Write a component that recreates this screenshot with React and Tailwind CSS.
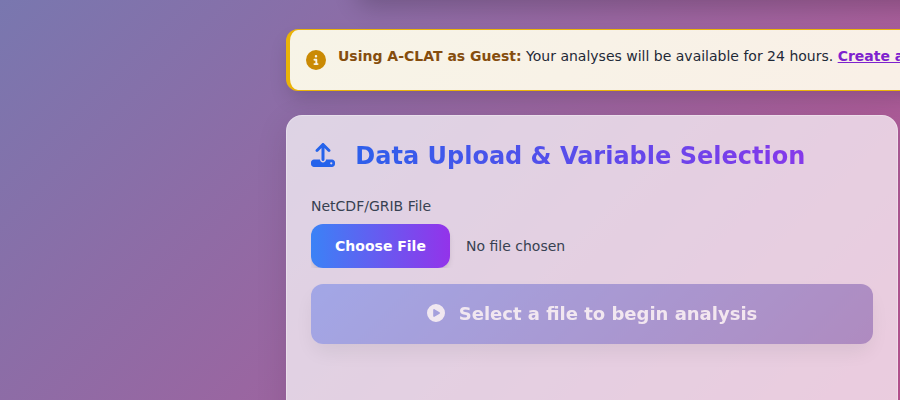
import { FaCircleInfo, FaCirclePlay, FaUpload } from 'react-icons/fa6';

function GuestBanner() {
  return (
    <div className="flex h-[62px] w-[900px] items-start rounded-xl border border-l-4 border-[#eab308] bg-[linear-gradient(135deg,#f7f4e7,#faeee7)] bg-origin-border p-4 shadow-[0_10px_20px_-3px_rgba(0,0,0,0.15)]">
      <FaCircleInfo className="mt-1 mr-3 size-5 shrink-0 text-[#ca8a04]" />
      <p className="text-sm whitespace-nowrap text-[#1f2937]">
        <strong className="font-bold text-[#854d0e]">Using A-CLAT as Guest:</strong> Your analyses will be available for
        24 hours.{' '}
        <a href="#" className="font-bold text-[#7e22ce] underline">
          Create an account
        </a>
      </p>
    </div>
  );
}

function UploadCard() {
  return (
    <section className="mt-6 h-[400px] w-[612px] rounded-2xl border border-white/30 bg-white/70 p-6 shadow-[0_8px_32px_rgba(0,0,0,0.1)]">
      <h2 className="mb-6 flex h-8 items-center bg-[linear-gradient(to_right,#2563eb,#9333ea)] bg-clip-text text-2xl font-bold whitespace-pre text-transparent">
        <FaUpload className="mr-3 mb-0.5 size-6 shrink-0 text-[#2563eb]" />
        <span>{' Data Upload & Variable Selection'}</span>
      </h2>
      <span className="mb-2 block text-sm text-[#374151]">NetCDF/GRIB File</span>
      <div className="mb-4 flex h-11 items-center gap-4 overflow-hidden text-sm text-[#374151]">
        <button className="h-11 w-[139px] rounded-xl bg-[linear-gradient(to_right,#3b82f6,#9333ea)] font-bold text-white shadow-[0_4px_6px_-1px_rgba(0,0,0,0.1),0_2px_4px_-2px_rgba(0,0,0,0.1)]">
          Choose File
        </button>
        <span>No file chosen</span>
      </div>
      <button
        disabled
        className="flex h-[60px] w-full items-center justify-center gap-3.5 rounded-xl bg-[linear-gradient(135deg,#667eea,#764ba2)] text-lg font-bold text-white opacity-50 shadow-[0_10px_20px_-3px_rgba(0,0,0,0.14)]"
      >
        <FaCirclePlay className="mb-0.5 size-[18px]" />
        <span>Select a file to begin analysis</span>
      </button>
    </section>
  );
}

export default function App() {
  return (
    <div className="h-[400px] w-[900px] overflow-hidden bg-[linear-gradient(135deg,#7977af,#bb5492)] pl-[286px] font-['DejaVu_Sans',sans-serif]">
      <div className="-mt-20 mb-[29px] ml-[68px] h-20 w-[700px] rounded-2xl shadow-[0_10px_25px_-3px_rgba(0,0,0,0.2)]" />
      <GuestBanner />
      <UploadCard />
    </div>
  );
}
